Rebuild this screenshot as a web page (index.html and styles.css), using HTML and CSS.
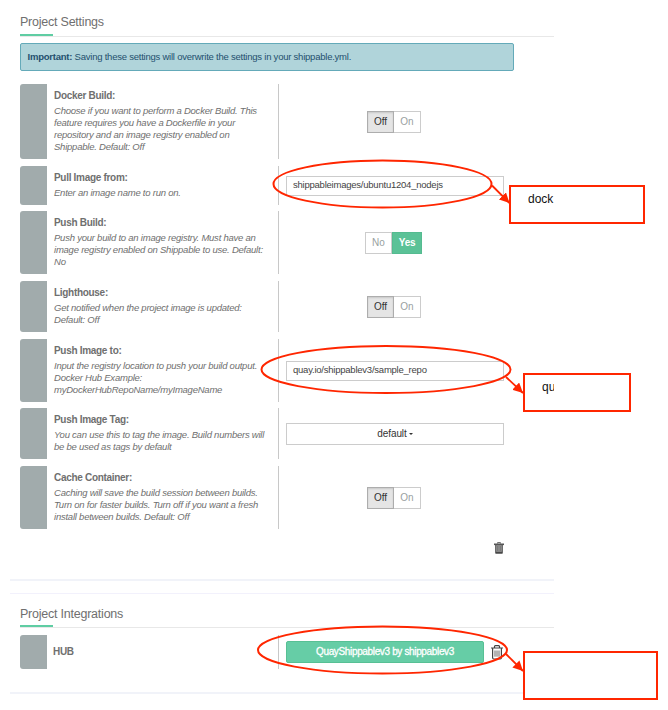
FILE: index.html
```html
<!DOCTYPE html>
<html lang="en">
<head>
<meta charset="utf-8">
<title>Project Settings</title>
<link rel="stylesheet" href="styles.css">
</head>
<body>
<main class="page">
  <section class="panel settings">
    <h2 class="heading"><span>Project Settings</span></h2>
    <div class="alert"><strong>Important:</strong> <span>Saving these settings will overwrite the settings in your shippable.yml.</span></div>
    <div class="rows">
      <div class="row h4">
        <div class="tab"></div>
        <div class="info"><h3>Docker Build:</h3><p>Choose if you want to perform a Docker Build. This<br>feature requires you have a Dockerfile in your<br>repository and an image registry enabled on<br>Shippable. Default: Off</p></div>
        <div class="control"><div class="toggle"><span class="btn active">Off</span><span class="btn">On</span></div></div>
      </div>
      <div class="row h1">
        <div class="tab"></div>
        <div class="info"><h3>Pull Image from:</h3><p>Enter an image name to run on.</p></div>
        <div class="control"><div class="field">shippableimages/ubuntu1204_nodejs</div></div>
      </div>
      <div class="row h3">
        <div class="tab"></div>
        <div class="info"><h3>Push Build:</h3><p>Push your build to an image registry. Must have an<br>image registry enabled on Shippable to use. Default:<br>No</p></div>
        <div class="control"><div class="toggle yes-no"><span class="btn">No</span><span class="btn yes">Yes</span></div></div>
      </div>
      <div class="row h2">
        <div class="tab"></div>
        <div class="info"><h3>Lighthouse:</h3><p>Get notified when the project image is updated:<br>Default: Off</p></div>
        <div class="control"><div class="toggle"><span class="btn active">Off</span><span class="btn">On</span></div></div>
      </div>
      <div class="row h3">
        <div class="tab"></div>
        <div class="info"><h3>Push Image to:</h3><p>Input the registry location to push your build output.<br>Docker Hub Example:<br>myDockerHubRepoName/myImageName</p></div>
        <div class="control"><div class="field">quay.io/shippablev3/sample_repo</div></div>
      </div>
      <div class="row h2">
        <div class="tab"></div>
        <div class="info"><h3>Push Image Tag:</h3><p>You can use this to tag the image. Build numbers will<br>be be used as tags by default</p></div>
        <div class="control"><div class="select"><span>default</span><i class="caret"></i></div></div>
      </div>
      <div class="row h3">
        <div class="tab"></div>
        <div class="info"><h3>Cache Container:</h3><p>Caching will save the build session between builds.<br>Turn on for faster builds. Turn off if you want a fresh<br>install between builds. Default: Off</p></div>
        <div class="control"><div class="toggle"><span class="btn active">Off</span><span class="btn">On</span></div></div>
      </div>
    </div>
    <div class="actions">
      <svg class="trash" width="10" height="12" viewBox="0 0 10 12"><path d="M3.5 1.5V.6h3v.9" fill="none" stroke="#666"/><path d="M0 1.5h10v1.6H0z" fill="#555"/><path d="M1.2 3h7.6v8a.8.8 0 0 1-.8.8H2a.8.8 0 0 1-.8-.8z" fill="#484848"/><path d="M2.2 3.2h5.6v6.6H2.2z" fill="#999"/><path d="M3.5 4v5M5 4v5M6.500 4v5" stroke="#666" stroke-width=".6"/></svg>
    </div>
  </section>
  <section class="panel integrations">
    <h2 class="heading"><span>Project Integrations</span></h2>
    <div class="row hub">
      <div class="tab"></div>
      <div class="info"><h3>HUB</h3></div>
      <div class="control">
        <span class="account">QuayShippablev3 by shippablev3</span>
        <svg class="bin" width="12" height="15" viewBox="0 0 12 15"><path d="M3.500 2.500V1.600q0-.9.9-.9h3.200q.9 0 .9.900v.9M0 3h12M1.600 3.500v9.300q0 1.200 1.200 1.200h6.400q1.200 0 1.200-1.200V3.500" fill="none" stroke="#444" stroke-width="1.200"/><path d="M4 5.500v6.200M6 5.500v6.200M8 5.500v6.200" stroke="#555" stroke-width=".9"/></svg>
      </div>
    </div>
  </section>
  <svg class="marks" width="668" height="710" viewBox="0 0 668 710">
    <defs><marker id="tip" viewBox="0 0 10 10" refX="10" refY="5" markerWidth="10" markerHeight="10" markerUnits="userSpaceOnUse" orient="auto"><path d="M0 0l10 5-10 5z" fill="#ff2600"/></marker></defs>
    <ellipse cx="382.500" cy="184" rx="109" ry="23.500"/>
    <ellipse cx="386" cy="369.500" rx="124.500" ry="23.500"/>
    <ellipse cx="382.500" cy="650" rx="124.500" ry="23.500"/>
    <path class="arrow" d="M492 185.500L509.500 203"/>
    <path class="arrow" d="M506 377L523 393"/>
    <path class="arrow" d="M506 654L523 671"/>
  </svg>
  <div class="callout pull"><span>dock</span></div>
  <div class="callout push"><span>qu</span></div>
  <div class="callout hub-note"></div>
</main>
</body>
</html>
```
FILE: styles.css
```css
* { box-sizing: border-box; }
body { margin: 0; background: #fff; font-family: "Liberation Sans", Arial, sans-serif; font-size: 9.5px; letter-spacing: -.23px; color: #6f6f6f; }
.page { position: relative; width: 668px; height: 710px; overflow: hidden; }
.panel { width: 544px; margin-left: 10px; padding-left: 10px; border-bottom: 2px solid #f1f3f9; }
.settings { height: 581px; padding-top: 10px; }
.integrations { margin-top: 12px; height: 101px; border-top: 1px solid #f2f1fc; padding-top: 9px; }
.heading { margin: 0; height: 27px; border-bottom: 1px solid #e8e8e8; font-weight: 400; font-size: 12.5px; line-height: 24px; }
.heading span { display: block; }
.heading::after { content: ""; display: block; width: 33px; height: 2px; background: #5fcda3; }
.integrations .heading { height: 25px; line-height: 22px; }
.alert { width: 494px; height: 28px; margin-top: 6px; padding-left: 6.5px; border: 1px solid #64aab9; border-radius: 2px; background: #b0d4da; color: #24506e; line-height: 26px; white-space: nowrap; }
.rows { margin-top: 13px; }
.row { display: flex; width: 494px; margin-bottom: 7px; }
.h1 { height: 39px; margin-bottom: 6px; }
.h2 { height: 51px; }
.h3 { height: 63px; }
.h4 { height: 75px; }
.rows .row:nth-child(5) { margin-bottom: 6px; }
.tab { width: 27px; background: #a1abac; border-radius: 3px 0 0 3px; }
.info { width: 232px; padding: 5px 0 0 7px; border-right: 1px solid #c8c8c8; white-space: nowrap; }
.info h3 { margin: 0 0 2px; font-size: 10px; letter-spacing: -.3px; line-height: 14px; font-weight: 700; }
.info p { margin: 0; line-height: 12px; font-style: italic; }
.control { width: 232px; padding-left: 7px; display: flex; align-items: center; }
.toggle { display: flex; margin-left: 81px; letter-spacing: 0; }
.yes-no { margin-left: 79px; }
.btn { width: 27px; height: 22px; border: 1px solid #ccc; text-align: center; line-height: 19px; font-size: 10px; color: #999f9f; }
.btn + .btn { border-left: 0; }
.btn.active { background: #e5e5e5; border: 1px solid #adadad; color: #333; box-shadow: inset 0 1px 2px rgba(0,0,0,.13); }
.btn.yes { width: 30px; background: #5bc297; border: 1px solid #55bb90; color: #fff; font-weight: 700; letter-spacing: -.3px; }
.field { width: 218px; height: 20px; border: 1px solid #ccc; padding-left: 6px; line-height: 16px; color: #444; white-space: nowrap; }
.select { width: 218px; height: 22px; border: 1px solid #ccc; display: flex; align-items: center; justify-content: center; gap: 2px; font-size: 10px; letter-spacing: -.1px; color: #333; }
.caret { border: 2px solid transparent; border-top-color: #333; border-bottom: 0; }
.actions { width: 484px; margin-top: 13px; display: flex; justify-content: flex-end; }
.hub { height: 34px; margin-top: 7px; }
.hub .info { padding-top: 10px; padding-left: 6px; }
.account { width: 198px; height: 22px; border: 1px solid #57c094; border-radius: 2px; background: #66cda6; color: #fff; text-align: center; line-height: 19px; font-size: 10px; letter-spacing: -.35px; -webkit-text-stroke: .3px #fff; }
.bin { margin-left: 7px; }
.marks { position: absolute; left: 0; top: 0; fill: none; stroke: #ff2600; stroke-width: 2; }
.marks marker { stroke: none; }
.arrow { marker-end: url(#tip); stroke-width: 1.8; }
.callout { position: absolute; background: #fff; border: 2px solid #ff2600; color: #111; font-size: 12px; line-height: 14px; letter-spacing: 0; }
.callout span { display: block; overflow: hidden; white-space: nowrap; }
.pull { left: 509px; top: 185px; width: 136px; height: 39px; padding: 5px 0 0 17px; }
.push { left: 523px; top: 373px; width: 108px; height: 39px; padding: 5px 0 0 17px; }
.push span { width: 12px; }
.hub-note { left: 523px; top: 651px; width: 135px; height: 49px; }
```
